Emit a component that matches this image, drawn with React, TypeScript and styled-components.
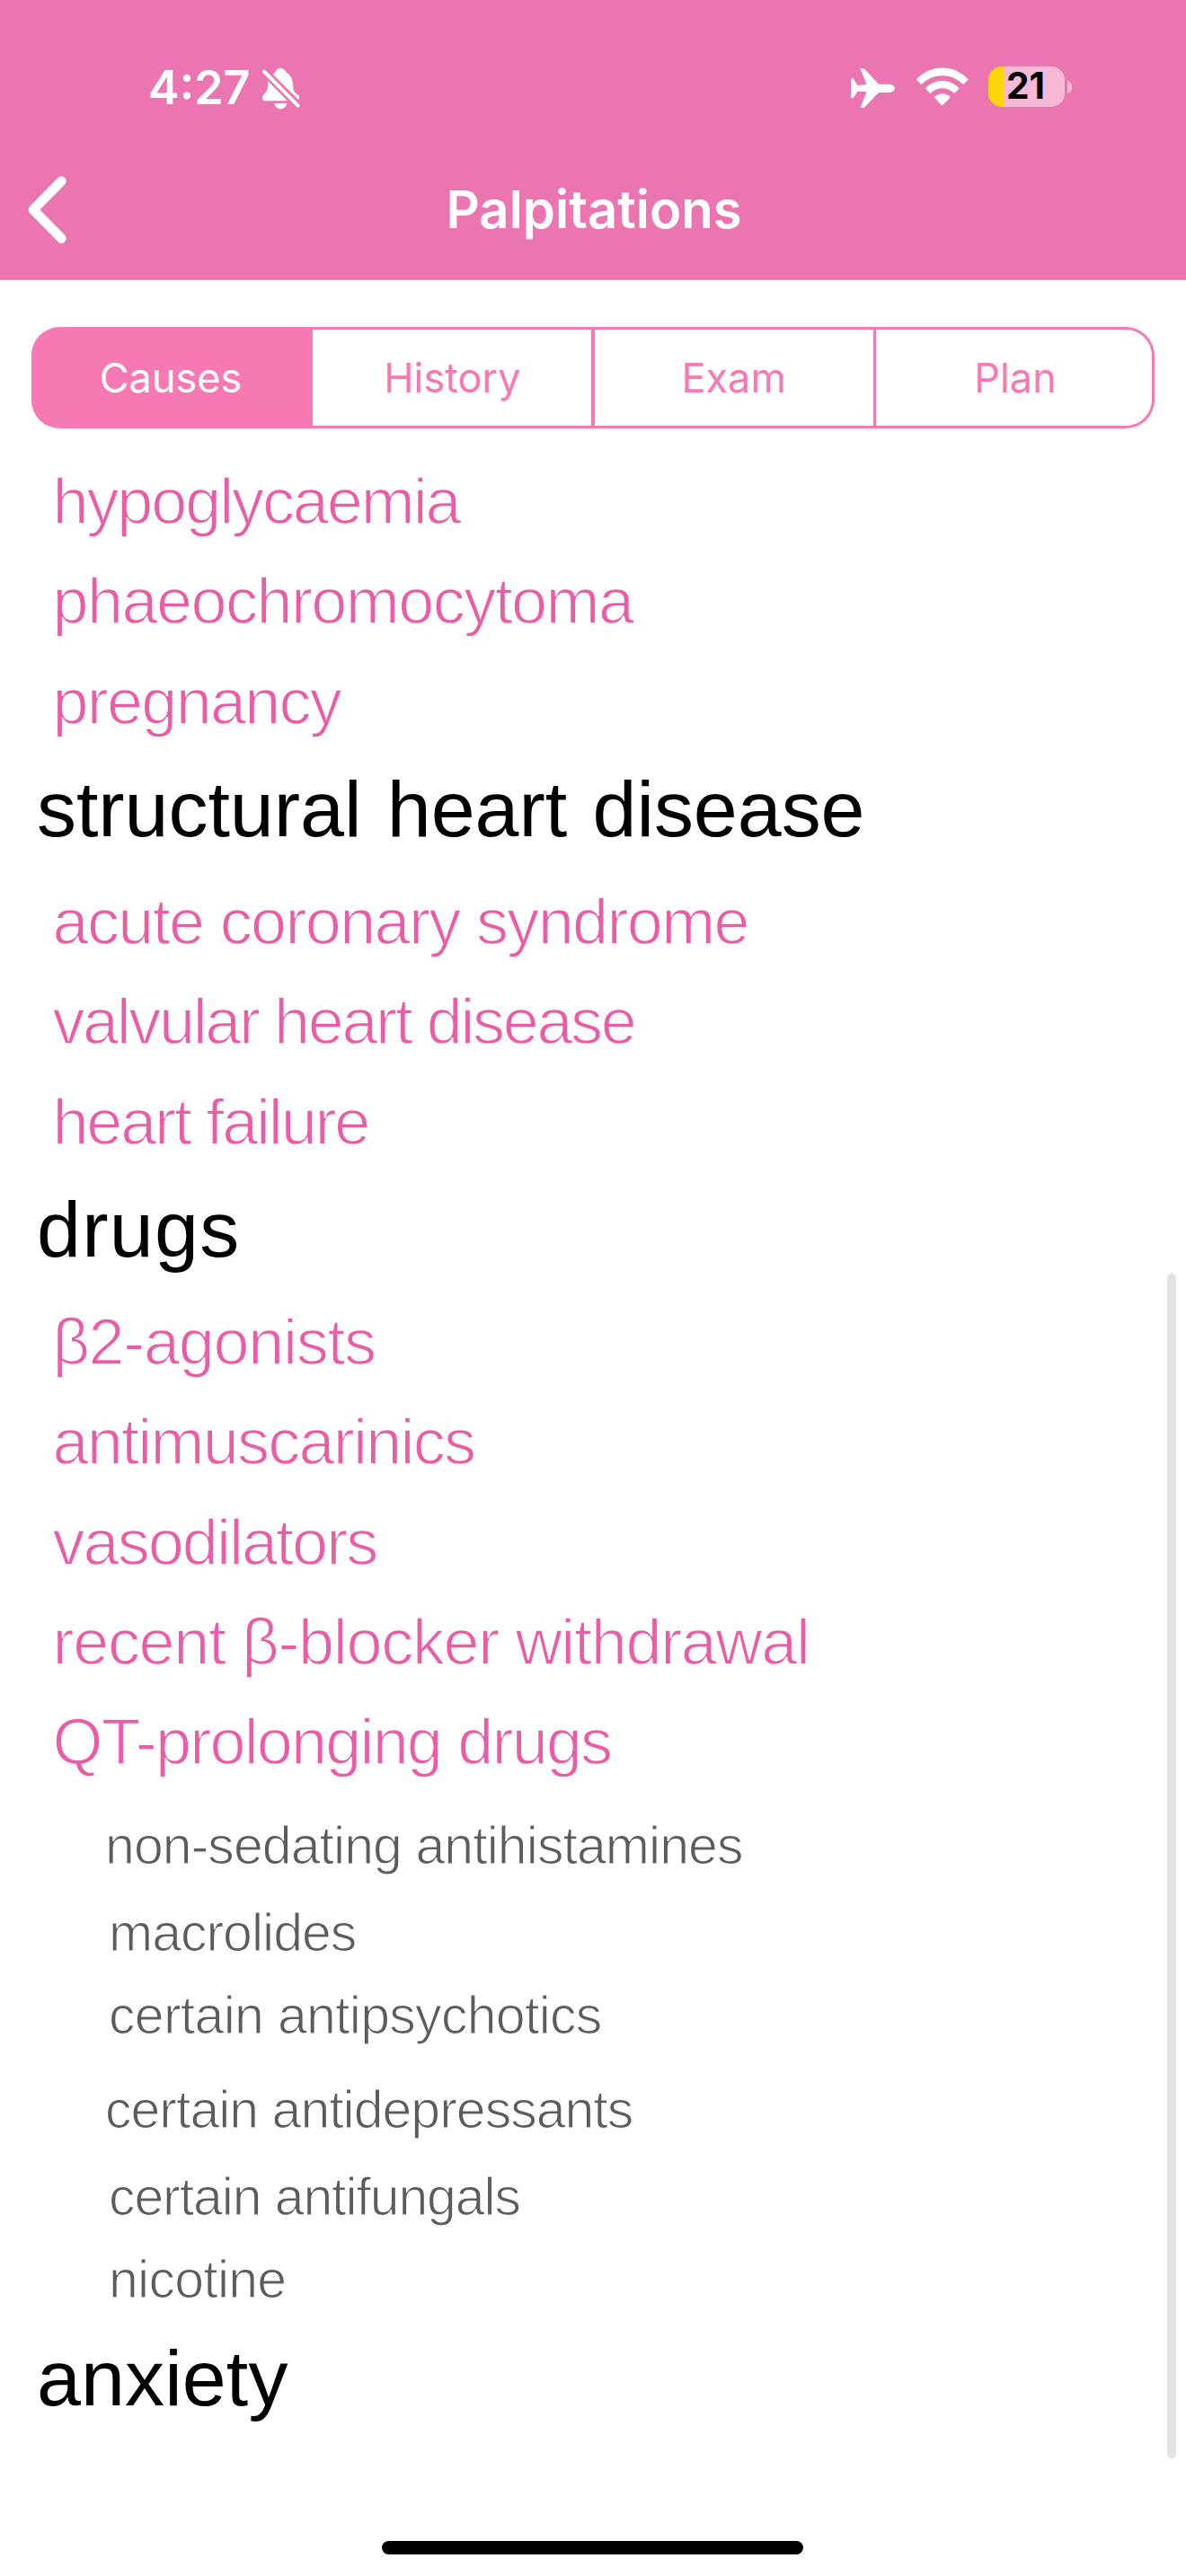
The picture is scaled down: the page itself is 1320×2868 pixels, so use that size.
import React from "react";
import styled, { createGlobalStyle } from "styled-components";

const GlobalStyle = createGlobalStyle`
  * { box-sizing: border-box; }
  html, body { margin: 0; padding: 0; background: #fff; }
`;

const Screen = styled.div`
  position: relative;
  display: flex;
  flex-direction: column;
  width: 1320px;
  height: 2868px;
  overflow: hidden;
  background: #fff;
  font-family: Inter, "Liberation Sans", sans-serif;
`;

const Header = styled.header`
  display: flex;
  flex-direction: column;
  height: 312px;
  background: #eb75b0;
  border-bottom: 1px solid #b9adb3;
`;

const StatusBar = styled.div`
  display: flex;
  align-items: center;
  justify-content: space-between;
  height: 167px;
  padding: 29px 127px 0 165px;
`;

const StatusGroup = styled.div`
  display: flex;
  align-items: center;
`;

const Time = styled.span`
  font-size: 52px;
  font-weight: 600;
  line-height: 64px;
  color: #fff;
`;

const BellIcon = styled.svg`
  width: 45.33px;
  height: 48.67px;
  margin-left: 11px;
`;

const PlaneIcon = styled.svg`
  width: 49.3px;
  height: 44.3px;
  margin-right: 24px;
`;

const WifiIcon = styled.svg`
  width: 57.6px;
  height: 42.6px;
  margin: 0 22px 4px 0;
`;

const Battery = styled.div`
  display: flex;
  align-items: center;
  gap: 3px;
  margin-bottom: 3px;
`;

const BatteryBody = styled.div<{ $level: number }>`
  display: flex;
  align-items: center;
  justify-content: center;
  width: 85px;
  height: 45px;
  padding: 0 2px 1px 0;
  border-radius: 15px;
  background: linear-gradient(to right, #ffd60a ${(p) => p.$level}%, #f5b9d7 ${(p) => p.$level}%);
  color: #000;
  font-size: 40.5px;
  font-weight: 700;
  line-height: 44px;
`;

const BatteryCap = styled.div`
  width: 5px;
  height: 14px;
  border-radius: 0 5px 5px 0 / 0 7px 7px 0;
  background: #f5b9d7;
`;

const NavBar = styled.div`
  display: grid;
  grid-template-columns: 200px 1fr 200px;
  align-items: center;
  height: 132px;
`;

const BackButton = styled.button`
  display: flex;
  padding: 1px 0 0 31px;
  border: 0;
  background: none;
`;

const Title = styled.h1`
  margin: 0;
  padding-left: 2px;
  color: #fff;
  font-size: 58px;
  font-weight: 600;
  line-height: 70px;
  text-align: center;
`;

const Segments = styled.nav`
  display: grid;
  grid-template-columns: repeat(4, 1fr);
  gap: 3.33px;
  height: 113px;
  margin: 52px 35px 0;
  padding: 3.3px 0;
  border-radius: 32px;
  background: #f679b4;
  overflow: hidden;
`;

const Segment = styled.button<{ $active?: boolean }>`
  padding: 0;
  border: 0;
  background: ${(p) => (p.$active ? "#f679b4" : "#fff")};
  color: ${(p) => (p.$active ? "#fff" : "#f679b4")};
  font-family: inherit;
  font-size: 45px;
  line-height: 56px;

  &:last-child {
    margin-right: 3.3px;
    padding-left: 3.3px;
    border-radius: 0 29px 29px 0;
  }
`;

const List = styled.main`
  display: flex;
  flex-direction: column;
  padding-top: 26px;
  font-family: "Liberation Sans", Arial, sans-serif;
  white-space: nowrap;
`;

const Heading = styled.h2<{ $tracking: number }>`
  height: 134px;
  margin: 0;
  padding-left: 41px;
  color: #000;
  font-size: 88px;
  font-weight: 400;
  line-height: 127px;
  letter-spacing: ${(p) => p.$tracking}px;
  word-spacing: 4px;
`;

/* A page-coloured stroke over the fill gives the light weight of the face. */
const Cause = styled.p<{ $tracking: number }>`
  height: 111.35px;
  margin: 0;
  padding-left: 58.5px;
  color: #ea5ca6;
  font-size: 72px;
  line-height: 111.35px;
  letter-spacing: ${(p) => p.$tracking}px;
  -webkit-text-stroke: 1.5px #fff;
`;

const Detail = styled.p<{ $tracking: number; $loose?: boolean }>`
  height: ${(p) => (p.$loose ? 110.4 : 91.8)}px;
  margin: 0;
  padding: ${(p) => (p.$loose ? "4px 0 0 117px" : "1px 0 0 121px")};
  color: #5c5c5c;
  font-size: 59px;
  line-height: ${(p) => (p.$loose ? 110.4 : 91.8)}px;
  letter-spacing: ${(p) => p.$tracking}px;
  -webkit-text-stroke: 1.2px #fff;
`;

const ScrollThumb = styled.div`
  position: absolute;
  top: 1418px;
  right: 11px;
  width: 10px;
  height: 1319px;
  border-radius: 5px;
  background: #e3e3e3;
`;

const HomeIndicator = styled.div`
  position: absolute;
  bottom: 24px;
  left: 425px;
  width: 469px;
  height: 15px;
  border-radius: 8px;
  background: #000;
`;

type Row = { kind: "heading" | "cause" | "detail"; text: string; tracking: number; loose?: boolean };

const rows: Row[] = [
  { kind: "cause", text: "hypoglycaemia", tracking: -2.1 },
  { kind: "cause", text: "phaeochromocytoma", tracking: -1.55 },
  { kind: "cause", text: "pregnancy", tracking: -1.74 },
  { kind: "heading", text: "structural heart disease", tracking: -0.05 },
  { kind: "cause", text: "acute coronary syndrome", tracking: -1.65 },
  { kind: "cause", text: "valvular heart disease", tracking: -2.39 },
  { kind: "cause", text: "heart failure", tracking: -2.2 },
  { kind: "heading", text: "drugs", tracking: 1.25 },
  { kind: "cause", text: "β2-agonists", tracking: -1.3 },
  { kind: "cause", text: "antimuscarinics", tracking: -1.76 },
  { kind: "cause", text: "vasodilators", tracking: -1.95 },
  { kind: "cause", text: "recent β-blocker withdrawal", tracking: -1.32 },
  { kind: "cause", text: "QT-prolonging drugs", tracking: -1.82 },
  { kind: "detail", text: "non-sedating antihistamines", tracking: -0.93, loose: true },
  { kind: "detail", text: "macrolides", tracking: -1 },
  { kind: "detail", text: "certain antipsychotics", tracking: -0.7 },
  { kind: "detail", text: "certain antidepressants", tracking: -0.99, loose: true },
  { kind: "detail", text: "certain antifungals", tracking: -1.1 },
  { kind: "detail", text: "nicotine", tracking: -0.75 },
  { kind: "heading", text: "anxiety", tracking: 0.1 },
];

const tabs = ["Causes", "History", "Exam", "Plan"];

function ListRow({ row }: { row: Row }) {
  if (row.kind === "heading") return <Heading $tracking={row.tracking}>{row.text}</Heading>;
  if (row.kind === "cause") return <Cause $tracking={row.tracking}>{row.text}</Cause>;
  return (
    <Detail $tracking={row.tracking} $loose={row.loose}>
      {row.text}
    </Detail>
  );
}

export default function App() {
  return (
    <Screen>
      <GlobalStyle />
      <Header>
        <StatusBar>
          <StatusGroup>
            <Time>4:27</Time>
            <BellIcon viewBox="870 100 136 146" fill="#fff">
              <path d="M895 149L960 215H885Q876 214 876 205C876 190 894 190 894 165Z" />
              <path d="M911 126Q916 125 919 119C925 102 949 102 956 120C972 128 978 145 979 165C980 187 986 187 996 196Q1002 203 997 212Z" />
              <path d="M916 223H958C955 248 919 248 916 223Z" />
              <path d="M882 117L995 231" stroke="#fff" strokeWidth="12" strokeLinecap="round" />
            </BellIcon>
          </StatusGroup>
          <StatusGroup>
            <PlaneIcon viewBox="141 108 148 133" fill="#fff">
              <path d="M234 161H268C280 161 288 168 288 175C288 182 280 189 268 189H234L188 237Q185 241 182 241H172L194 187L163 185L152 204Q149 208 145 208H141V142H145Q149 142 152 146L163 165L194 162L172 109H180Q185 109 188 112Z" />
            </PlaneIcon>
            <WifiIcon viewBox="359 104 173 128" fill="#fff">
              <path d="M360 143C408 93 483 93 531 143Q532 145 531 146L517 160Q515 161 514 160C476 122 415 122 377 160Q375 161 374 160L360 146Z" />
              <path d="M390 173C421 141 470 141 501 173Q502 175 501 176L487 190Q485 192 484 190C461 168 430 168 407 190Q405 192 404 190L390 176Z" />
              <path d="M420 203C434 188 457 188 471 203Q472 205 471 206L447 230Q445 232 443 230L420 206Z" />
            </WifiIcon>
            <Battery>
              <BatteryBody $level={21}>21</BatteryBody>
              <BatteryCap />
            </Battery>
          </StatusGroup>
        </StatusBar>
        <NavBar>
          <BackButton aria-label="Back">
            <svg width="43" height="75" viewBox="0 0 43 75" fill="none" stroke="#fff" strokeWidth="10.6" strokeLinecap="round" strokeLinejoin="round">
              <path d="M37.4 5.5L6 37.5L37.4 69.5" />
            </svg>
          </BackButton>
          <Title>Palpitations</Title>
        </NavBar>
      </Header>
      <Segments>
        {tabs.map((tab, i) => (
          <Segment key={tab} $active={i === 0}>
            {tab}
          </Segment>
        ))}
      </Segments>
      <List>
        {rows.map((row) => (
          <ListRow key={row.text} row={row} />
        ))}
      </List>
      <ScrollThumb />
      <HomeIndicator />
    </Screen>
  );
}
